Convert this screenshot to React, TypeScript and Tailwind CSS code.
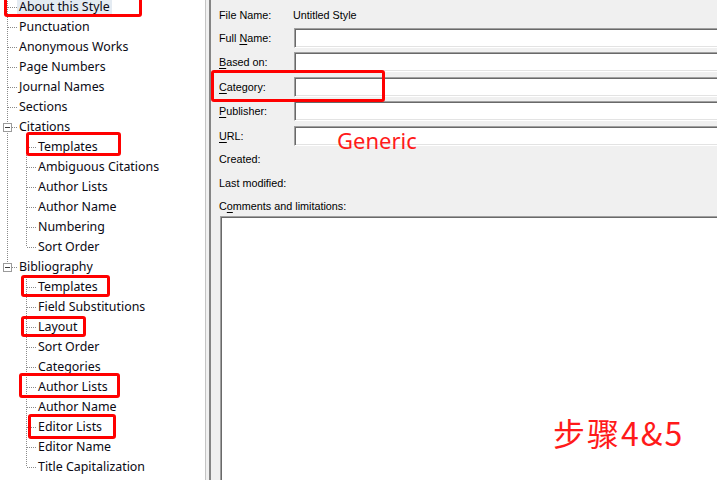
import React from "react";

type Row = {
  label: string;
  depth: 0 | 1;
  parent?: boolean;
  last?: boolean;
  trunk?: boolean;
  selected?: boolean;
};

const citationKids = ["Templates", "Ambiguous Citations", "Author Lists", "Author Name", "Numbering", "Sort Order"];
const bibliographyKids = [
  "Templates",
  "Field Substitutions",
  "Layout",
  "Sort Order",
  "Categories",
  "Author Lists",
  "Author Name",
  "Editor Lists",
  "Editor Name",
  "Title Capitalization",
];

const rows: Row[] = [
  { label: "About this Style", depth: 0, selected: true },
  { label: "Punctuation", depth: 0 },
  { label: "Anonymous Works", depth: 0 },
  { label: "Page Numbers", depth: 0 },
  { label: "Journal Names", depth: 0 },
  { label: "Sections", depth: 0 },
  { label: "Citations", depth: 0, parent: true },
  ...citationKids.map((label, i) => ({ label, depth: 1 as const, trunk: true, last: i === citationKids.length - 1 })),
  { label: "Bibliography", depth: 0, parent: true, last: true },
  ...bibliographyKids.map((label, i) => ({ label, depth: 1 as const, trunk: false, last: i === bibliographyKids.length - 1 })),
];

const DOT = "#8a8a8a";

// last cell of a row: vertical + horizontal dotted line, optional [-] box
const Branch = ({ last, box }: { last?: boolean; box?: boolean }) => (
  <svg width="17" height="20" className="shrink-0" shapeRendering="crispEdges">
    <line x1="7.5" y1="0" x2="7.5" y2={last ? 10 : 20} stroke={DOT} strokeDasharray="1 1" />
    <line x1={box ? 12 : 8} y1="10.5" x2="17" y2="10.5" stroke={DOT} strokeDasharray="1 1" />
    {box && (
      <>
        <rect x="3.5" y="6.5" width="8" height="8" fill="#fff" stroke="#9b9b9b" />
        <line x1="5" y1="10.5" x2="10" y2="10.5" stroke="#3c3c3c" />
      </>
    )}
  </svg>
);

const Trunk = ({ on }: { on?: boolean }) => (
  <svg width="19" height="20" className="shrink-0" shapeRendering="crispEdges">
    {on && <line x1="7.5" y1="0" x2="7.5" y2="20" stroke={DOT} strokeDasharray="1 1" />}
  </svg>
);

const TreeRow = ({ row }: { row: Row }) => (
  <div className="flex h-[20px] items-center">
    {row.depth === 1 && <Trunk on={row.trunk} />}
    <Branch last={row.last} box={row.parent} />
    <span className={"px-[2px] leading-[16px] whitespace-nowrap " + (row.selected ? "bg-[#e4ebf2]" : "")}>
      {row.label}
    </span>
  </div>
);

const sunken =
  "border border-t-[#a0a0a0] border-l-[#a0a0a0] border-b-white border-r-white bg-white shadow-[inset_1px_1px_0_#696969,inset_-1px_-1px_0_#e3e3e3]";

const Field = ({ label, className }: { label: React.ReactNode; className?: string }) => (
  <div className={"flex h-[20px] items-center " + (className ?? "")}>
    <div className="w-[75px] shrink-0">{label}</div>
    <div className={"h-[20px] w-[440px] shrink-0 " + sunken} />
  </div>
);

const Key = ({ children }: { children: string }) => <span className="underline underline-offset-[2px]">{children}</span>;

export default function App() {
  return (
    <div className="relative flex h-[480px] w-[717px] overflow-hidden bg-[#f0f0f0] font-['Liberation_Sans',Arial,sans-serif] text-black">
      {/* style tree */}
      <div className="h-full w-[206px] shrink-0 overflow-hidden border-r border-[#c4c4c4] bg-white font-['Noto_Sans','Noto_Sans_CJK_SC',sans-serif] text-[12.4px] text-[#0a0a14]">
        <div className="-mt-[3px]">
          {rows.map((r, i) => (
            <TreeRow key={i} row={r} />
          ))}
        </div>
      </div>

      {/* about panel */}
      <div className="ml-[3px] min-w-0 flex-1 overflow-hidden border-l-2 border-[#858585] pl-[8px] pt-[5px] text-[10.8px]">
        <div className="flex h-[20px] items-center">
          <div className="w-[74px] shrink-0">File Name:</div>
          <div>Untitled Style</div>
        </div>
        <Field className="mt-[3px]" label={<>Full <Key>N</Key>ame:</>} />
        <Field className="mt-[4px]" label={<><Key>B</Key>ased on:</>} />
        <Field className="mt-[5px]" label={<><Key>C</Key>ategory:</>} />
        <Field className="mt-[4px]" label={<><Key>P</Key>ublisher:</>} />
        <Field className="mt-[5px]" label={<><Key>U</Key>RL:</>} />
        <div className="mt-[3px] flex h-[20px] items-center">Created:</div>
        <div className="mt-[4px] flex h-[20px] items-center">Last modified:</div>
        <div className="mt-[5px] flex h-[16px] items-center">
          C<Key>o</Key>mments and limitations:
        </div>
        <div className={"mt-[2px] ml-[1px] h-[300px] w-[520px] " + sunken} />
      </div>

      {/* red annotations */}
      <div className="absolute left-[4px] top-[-4px] h-[21px] w-[138px] rounded-[3px] border-[3px] border-[#f00]" />
      <div className="absolute left-[26px] top-[132px] h-[24px] w-[95px] rounded-[3px] border-[3px] border-[#f00]" />
      <div className="absolute left-[21px] top-[275px] h-[22px] w-[89px] rounded-[3px] border-[3px] border-[#f00]" />
      <div className="absolute left-[21px] top-[316px] h-[21px] w-[65px] rounded-[3px] border-[3px] border-[#f00]" />
      <div className="absolute left-[19px] top-[373px] h-[25px] w-[101px] rounded-[3px] border-[3px] border-[#f00]" />
      <div className="absolute left-[28px] top-[414px] h-[25px] w-[88px] rounded-[3px] border-[3px] border-[#f00]" />
      <div className="absolute left-[211px] top-[70px] h-[32px] w-[174px] rounded-[3px] border-[3px] border-[#f00]" />
      <div className="absolute left-[337px] top-[129px] font-['Noto_Sans',sans-serif] text-[22px] leading-none text-[#ff1a1a]">
        Generic
      </div>
      <div className="absolute left-[553px] top-[416px] font-['Noto_Sans_CJK_SC',sans-serif] text-[32px] leading-none tracking-[2px] text-[#ff1a1a]">
        步骤4&amp;5
      </div>
    </div>
  );
}
